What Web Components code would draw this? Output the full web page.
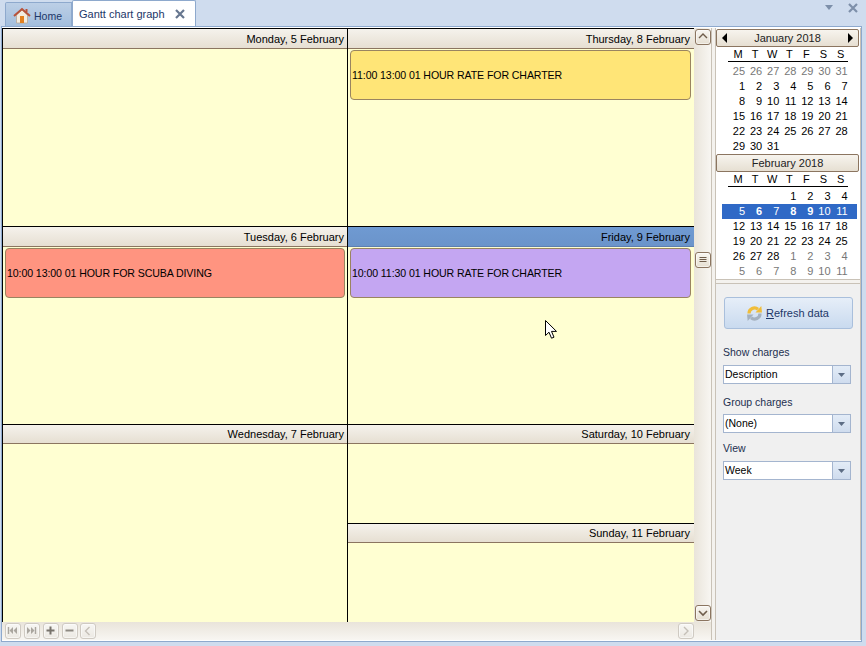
<!DOCTYPE html>
<html><head><meta charset="utf-8">
<style>
html,body{margin:0;padding:0;height:100%;overflow:hidden}
body{background:#cfdcee;font:11px "Liberation Sans",Arial,sans-serif;color:#000}
</style></head><body>
<gantt-app></gantt-app>
<script>
const def=(name,css,html,init)=>customElements.define(name,class extends HTMLElement{
  connectedCallback(){ if(this.shadowRoot)return; const r=this.attachShadow({mode:'open'});
    r.innerHTML=`<style>${css}</style>${typeof html==='function'?html(this):html}`; if(init)init(this,r);}
});
const ICONS={
 up:'<path d="M4 9l4-4 4 4" fill="none" stroke="#6f5d4b" stroke-width="1.4"/>',
 down:'<path d="M4 6l4 4 4-4" fill="none" stroke="#6f5d4b" stroke-width="1.6"/>',
 grip:'<path d="M4.500 5.500h7M4.500 7.500h7M4.500 9.500h7" stroke="#6f5d4b" stroke-width="1"/>',
 left:'<path d="M9.500 4l-4 4 4 4" fill="none" stroke="#c4bfb7" stroke-width="1.4"/>',
 right:'<path d="M6 4l4 4-4 4" fill="none" stroke="#c4bfb7" stroke-width="1.4"/>',
 first:'<path d="M3.500 4v7" stroke="#aaa69f" stroke-width="1.4"/><path d="M8 4v7L4.500 7.500zM12 4v7L8.500 7.500z" fill="#aaa69f"/>',
 last:'<path d="M11.500 4v7" stroke="#aaa69f" stroke-width="1.4"/><path d="M7 4v7l3.500-3.500zM3 4v7l3.500-3.500z" fill="#aaa69f"/>',
 plus:'<path d="M3.500 7.500h8M7.500 3.500v8" stroke="#77736c" stroke-width="2"/>',
 minus:'<path d="M3.500 7.500h8" stroke="#8e8a83" stroke-width="2"/>'
};
def('x-btn',`:host{display:block;box-sizing:border-box;width:16px;height:16px;border:1px solid #8b7560;border-radius:3px;background:linear-gradient(#f8f6f1,#e6dfd2);box-shadow:inset 0 0 0 1px #fff8;flex:none}
:host([soft]){border-color:#cfcac2;background:linear-gradient(#f7f6f3,#ece9e3)}
svg{display:block;margin:-1px;width:16px;height:16px}`,
 e=>`<svg viewBox="0 0 16 16">${ICONS[e.getAttribute('icon')]}</svg>`);

def('x-tabs',`:host{display:flex;height:26px;flex:none;position:relative;align-items:flex-end;padding-left:5px;color:#1c3768}
.t{box-sizing:border-box;display:flex;align-items:center;border:1px solid #8ea9cd;border-bottom:0}
.home{width:67px;height:24px;background:linear-gradient(#bccfe6,#a3bedd);padding:2px 0 0 7px;gap:3px;border-radius:2px 0 0 0;font-size:10.500px}
.gantt{width:124px;height:26px;background:#fff;padding:0 0 0 6px;border-radius:2px 2px 0 0}
.gantt svg{margin-left:10px}
.right{position:absolute;right:8px;top:3px;display:flex;gap:14px;align-items:center}
`,`<div class="t home"><svg width="18" height="17" viewBox="0 0 18 17"><path d="M3.500 8v8h11V8L9 3z" fill="#f3ece0" stroke="#b9a894" stroke-width=".8"/><path d="M7 9h4v7H7z" fill="#e2801f"/><path d="M1 9l8-7 8 7" fill="none" stroke="#b9523a" stroke-width="2"/><path d="M12.500 2h2v3h-2z" fill="#b9523a"/></svg><span>Home</span></div>
<div class="t gantt"><span>Gantt chart graph</span><svg width="10" height="10" viewBox="0 0 10 10"><path d="M1 1l8 8M9 1l-8 8" stroke="#66768f" stroke-width="2.200"/></svg></div>
<div class="right"><svg width="10" height="6" viewBox="0 0 10 6"><path d="M1 0h8L5 5z" fill="#7d8fa9"/></svg><svg width="10" height="10" viewBox="0 0 10 10"><path d="M1 1l8 8M9 1l-8 8" stroke="#7d8fa9" stroke-width="2.200"/></svg></div>`);

def('x-appt',`:host{display:flex;align-items:center;box-sizing:border-box;height:50px;margin:1px var(--mr,2px) 0 2px;padding:0 0 0 1px;border:1px solid #9a8460;border-radius:4px;white-space:nowrap;background:var(--c);font-size:10.600px;letter-spacing:-.1px}`,`<slot></slot>`);

def('x-day',`:host{display:flex;flex-direction:column;min-height:0;box-sizing:border-box;border-top:1px solid #000}
.h{box-sizing:border-box;height:20px;flex:none;border-bottom:1px solid #8b7560;background:linear-gradient(#f5f2ec,#e6dfd2);text-align:right;padding:2px var(--hp,3px) 0 0;line-height:16px;white-space:nowrap}
:host([compact]) .h{height:19px;padding-top:1px}
:host([selected]) .h{background:linear-gradient(#6f9ad2,#6b94ca);border-bottom-color:#5d7fb0}
.b{flex:1;background:#ffffd2}`,
 e=>`<div class="h">${e.getAttribute('label')}</div><div class="b"><slot></slot></div>`);

def('x-col',`:host{display:grid;grid-template-rows:repeat(3,1fr);min-height:0;flex:none;width:var(--w)}`,`<slot></slot>`);
def('x-split',`:host{display:grid;grid-template-rows:1fr 1fr;min-height:0}`,`<slot></slot>`);

def('x-hbar',`:host{display:flex;align-items:center;height:18px;flex:none;background:linear-gradient(#e9e4da,#f8f6f2);padding:0 17px 0 3px;gap:3px;box-sizing:border-box}
.sp{flex:1}.l{margin-left:-1px}`,
 `<x-btn soft icon="first"></x-btn><x-btn soft icon="last"></x-btn><x-btn soft icon="plus"></x-btn><x-btn soft icon="minus"></x-btn><x-btn class="l" soft icon="left"></x-btn><span class="sp"></span><x-btn soft icon="right"></x-btn>`);

def('x-vbar',`:host{display:flex;flex-direction:column;align-items:flex-end;justify-content:space-between;box-sizing:border-box;width:17px;flex:none;padding:1px 0 1px;background:linear-gradient(90deg,#e9e4da,#f8f6f2)}
.sp{flex:1}`,
 `<x-btn icon="up"></x-btn><span class="sp" style="flex:206"></span><x-btn icon="grip"></x-btn><span class="sp" style="flex:336"></span><x-btn icon="down"></x-btn>`);

def('x-calendar',`:host{display:block;background:#fff;line-height:15px;color:#000}
.m{box-sizing:border-box;height:18px;margin:0 1px 0 0;border:1px solid #8b7560;border-radius:2px;background:linear-gradient(#f7f4ee,#e6dfd2);display:flex;align-items:center;justify-content:space-between;padding:0 5px;line-height:16px}
.m span{flex:1;text-align:center;color:#222}
.grid{display:grid;grid-template-columns:repeat(7,17.100px);padding:0 0 0 12px;}
.dow{text-align:center;height:14px;line-height:14px;padding-left:3px;box-sizing:border-box}
.line{grid-column:1/-1;height:1px;background:#000;margin:0 0 2px 0;width:120px}
.d{text-align:right;height:15px}
.o{color:#777}
.sel{background:#2f69c6;color:#fff;margin:0 -9px 0 -6px;padding:0 9px 0 6px;display:grid;grid-template-columns:repeat(7,17.100px);grid-column:1/-1}
.sel b{font-weight:700}
.sel .d{color:#fff}`,
 e=>{
  const dows=['M','T','W','T','F','S','S'].map(x=>`<div class="dow">${x}</div>`).join('');
  const days=JSON.parse(e.getAttribute('days'));
  const bold=(e.getAttribute('bold')||'').split(',');
  const sel=e.getAttribute('sel');
  const cells=days.map((w)=>{
    const row=w.map(v=>{const s=String(v);const o=s.startsWith('o');const t=o?s.slice(1):s;
      if(t==='0')return '<div class="d"></div>';
      const isb=bold.includes(t)&&sel===String(w[0]);
      return `<div class="d${o?' o':''}">${isb?'<b>'+t+'</b>':t}</div>`}).join('');
    return sel===String(w[0])?`<div class="sel">${row}</div>`:row;
  }).join('');
  const arrows=e.hasAttribute('nav');
  return `<div class="m">${arrows?'<svg width="5" height="10" viewBox="0 0 5 10"><path d="M5 0v10L0 5z"/></svg>':''}<span>${e.getAttribute('title')}</span>${arrows?'<svg width="5" height="10" viewBox="0 0 5 10"><path d="M0 0v10l5-5z"/></svg>':''}</div>
  <div class="grid">${dows}<div class="line"></div>${cells}</div>`;
 });

def('x-combo',`:host{display:flex;box-sizing:border-box;height:19px;width:128px;border:1px solid #a4b5cf;background:#fff;align-items:center;line-height:16px;color:#000}
span{flex:1;padding:0 0 1px 1px}
i{display:flex;align-items:center;justify-content:center;width:17px;height:100%;border-left:1px solid #a4b5cf;background:linear-gradient(#e3ecf7,#cfdcee)}`,
 `<span><slot></slot></span><i><svg width="7" height="4" viewBox="0 0 7 4"><path d="M0 0h7L3.500 4z" fill="#5d6d85"/></svg></i>`);

def('x-refresh',`:host{display:flex;box-sizing:border-box;width:129px;height:32px;border:1px solid #a9bfdc;border-radius:3px;background:linear-gradient(#e6eef8,#c9daef);align-items:center;justify-content:center;gap:3px;padding-right:2px;color:#1c3768;font-size:11px}
u{text-decoration:underline}`,
 `<svg width="17" height="17" viewBox="0 0 17 17"><path d="M14 8.500A5.500 5.500 0 0 1 5 12.800" fill="none" stroke="#a4b1bf" stroke-width="3.200"/><path d="M7.500 9.500H1l.7 6.500z" fill="#a4b1bf"/><path d="M3 8.500A5.500 5.500 0 0 1 12 4.200" fill="none" stroke="#f0bd3a" stroke-width="3.200"/><path d="M9.500 7.500H16L15.300 1z" fill="#f0bd3a"/></svg><span><u>R</u>efresh data</span>`);

def('x-side',`:host{display:flex;flex-direction:column;flex:1;min-width:0;box-sizing:border-box;border-left:1px solid #c9c2b7;border-right:1px solid #c9c2b7;background:#f0f0f0}
.cal{background:#fff;height:252px;box-sizing:border-box;border-bottom:1px solid #c9c2b7;padding-top:1px}
.gap{height:4px;flex:none;background:#f4f2ee;border-bottom:1px solid #c9c2b7;box-sizing:border-box}
.form{flex:1;display:flex;flex-direction:column;padding:13px 0 0 7px;color:#1c2f4f;font-size:10.500px}
x-refresh{margin-left:1px}
label{display:block;line-height:14px}
.l1{margin-top:16px;margin-bottom:6px}
.l2{margin-top:11px;margin-bottom:5px}
.l3{margin-top:8px;margin-bottom:6px}`,
 `<div class="cal"><x-calendar nav title="January 2018" days='[["o25","o26","o27","o28","o29","o30","o31"],[1,2,3,4,5,6,7],[8,9,10,11,12,13,14],[15,16,17,18,19,20,21],[22,23,24,25,26,27,28],[29,30,31,0,0,0,0]]'></x-calendar>
 <x-calendar title="February 2018" sel="5" bold="6,8,9" days='[[0,0,0,1,2,3,4],[5,6,7,8,9,10,11],[12,13,14,15,16,17,18],[19,20,21,22,23,24,25],[26,27,28,"o1","o2","o3","o4"],["o5","o6","o7","o8","o9","o10","o11"]]'></x-calendar></div>
 <div class="gap"></div>
 <div class="form"><x-refresh></x-refresh>
 <label class="l1">Show charges</label><x-combo>Description</x-combo>
 <label class="l2">Group charges</label><x-combo>(None)</x-combo>
 <label class="l3">View</label><x-combo>Week</x-combo></div>`);

def('gantt-app',`:host{display:flex;flex-direction:column;height:646px;width:866px;position:relative}
.frame{box-sizing:border-box;flex:none;height:616px;margin:0 4px 0 1px;border:1px solid #8ea9cd;background:#fff;padding:1px 0 1px 0;display:flex}
.main{display:flex;flex-direction:column;flex:none;width:709px}
.top{flex:1;display:flex;min-height:0;border-left:1px solid #000}
.v{width:1px;background:#000;flex:none}
.split{flex:none;width:4px;box-sizing:border-box;border-left:1px solid #c9c2b7;background:#f4f2ee}
.cursor{position:absolute;left:545px;top:320px}
`,
 `<x-tabs></x-tabs>
 <div class="frame"><div class="main"><div class="top">
  <x-col style="--w:344px"><x-day label="Monday, 5 February"></x-day><x-day label="Tuesday, 6 February"><x-appt style="--c:#ff9480">10:00 13:00 01 HOUR FOR SCUBA DIVING</x-appt></x-day><x-day compact label="Wednesday, 7 February"></x-day></x-col>
  <div class="v"></div>
  <x-col style="--w:346px;--mr:3px;--hp:4px"><x-day label="Thursday, 8 February"><x-appt style="--c:#ffe577">11:00 13:00 01 HOUR RATE FOR CHARTER</x-appt></x-day><x-day selected label="Friday, 9 February"><x-appt style="--c:#c4a6f2">10:00 11:30 01 HOUR RATE FOR CHARTER</x-appt></x-day>
   <x-split><x-day compact label="Saturday, 10 February"></x-day><x-day compact label="Sunday, 11 February"></x-day></x-split></x-col>
  <x-vbar></x-vbar>
 </div><x-hbar></x-hbar></div>
 <div class="split"></div><x-side></x-side></div>
 <svg class="cursor" width="14" height="20" viewBox="0 0 14 20"><path d="M.5.500v15l3.500-3.300 2.500 6 2.500-1-2.500-5.800h5z" fill="#fff" stroke="#000" stroke-width="1"/></svg>`);
</script>
</body></html>
